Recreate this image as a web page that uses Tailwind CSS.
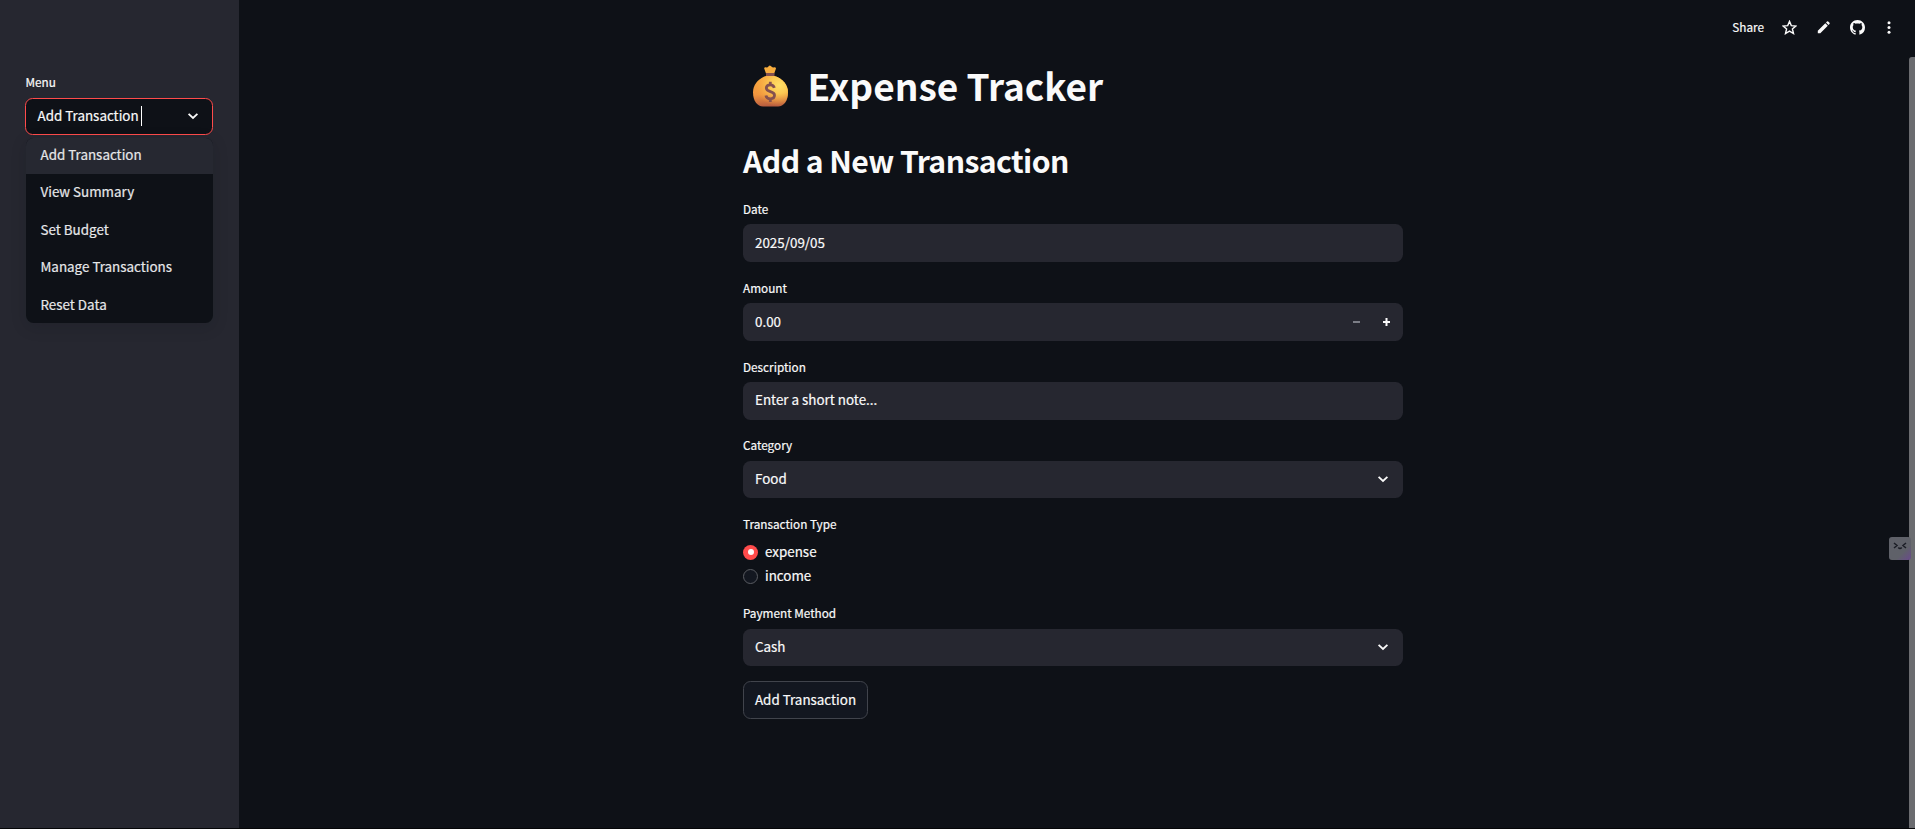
<!DOCTYPE html>
<html lang="en">
<head>
<meta charset="utf-8">
<title>Expense Tracker</title>
<script src="https://cdn.jsdelivr.net/npm/@tailwindcss/browser@4"></script>
</head>
<body class="relative flex h-[829px] w-[1915px] overflow-hidden bg-[#0e1117] font-['Noto_Sans_CJK_JP','Noto_Sans_CJK_SC',sans-serif] text-[13.4px] leading-[24px] text-[#fafafa] whitespace-nowrap [-webkit-text-stroke:0.2px_currentColor]">
  <aside class="h-full w-[239px] shrink-0 bg-[#262730] px-[25px] pt-[72px]">
    <div class="h-[22px] pl-[0.5px] text-[11.75px] leading-[20px]">Menu</div>
    <div class="relative mt-1 w-[188px]">
      <div class="flex h-[37px] items-center rounded-[7.5px] border border-[#ff4b4b] bg-[#0e1117] pb-[2px] pl-[11.5px] pr-[13px]">
        <span class="pb-[2px]">Add Transaction</span>
        <span class="ml-[2.5px] h-5 w-px bg-white"></span>
        <svg class="ml-auto" width="12" height="12" viewBox="0 0 12 12" fill="none" stroke="#fafafa" stroke-width="1.8"><path d="M1.6 3.8 6 8l4.400-4.200"/></svg>
      </div>
      <ul class="absolute left-[0.5px] top-[40px] w-[187.5px] overflow-hidden rounded-[7.5px] bg-[#0e1117] text-[#e6e7e9] shadow-[0_4px_16px_rgba(14,17,23,0.16)]">
        <li class="flex h-[36px] items-center bg-[#262831] pb-[4px] pl-[15px]">Add Transaction</li>
        <li class="flex h-[37.5px] items-center pb-[4px] pl-[15px]">View Summary</li>
        <li class="flex h-[37.5px] items-center pb-[2px] pl-[15px]">Set Budget</li>
        <li class="flex h-[37.5px] items-center pb-[4px] pl-[15px]">Manage Transactions</li>
        <li class="flex h-[36.5px] items-center pb-[1px] pl-[15px]">Reset Data</li>
      </ul>
    </div>
  </aside>
  <main class="flex-1 pl-[504px] pt-[61px]">
    <div class="flex w-[660px] flex-col">
      <h1 class="flex h-[50px] items-center text-[37px] font-bold leading-[50px] [-webkit-text-stroke:0]">
        <svg class="ml-[10px] mr-[19.5px]" width="35" height="42" viewBox="0 0 35 42">
          <defs>
            <linearGradient id="bag" x1="0.2" y1="0" x2="0.3" y2="1"><stop offset="0" stop-color="#f9a83f"/><stop offset=".6" stop-color="#f0953f"/><stop offset="1" stop-color="#b85c3f"/></linearGradient>
            <radialGradient id="glow" cx=".75" cy=".3" r=".7"><stop offset="0" stop-color="#ffe067"/><stop offset=".4" stop-color="#fdce55" stop-opacity=".9"/><stop offset="1" stop-color="#f9a83f" stop-opacity="0"/></radialGradient>
          </defs>
          <path d="M13 8.500 11.200 3.600Q11 2 13 2.200q1.300.5 2-.2 1.500-3 4 0 .8.700 2 .2 2-.2 2 1.400L21.200 8.500Z" fill="#f7ad3e"/>
          <path d="M13 8h8.500v3.500H13z" fill="#85514f"/>
          <path d="M13 11h8.500C29.500 13.500 35 19.500 35 27.500c0 8.500-4.500 14-10 14H10c-5.500 0-10-5.500-10-14C0 19.500 5.500 13.500 13 11Z" fill="url(#bag)"/>
          <path d="M13 11h8.500C29.500 13.500 35 19.500 35 27.500c0 8.500-4.500 14-10 14H10c-5.500 0-10-5.500-10-14C0 19.500 5.500 13.500 13 11Z" fill="url(#glow)"/>
          <path d="M21.300 22.800c-.5-2-2-3-4-3-2.500 0-4 1.400-4 3.300 0 4.700 8.200 2.500 8.200 7.200 0 2.200-1.700 3.500-4.200 3.500s-4-1.300-4.400-3.300M17.300 16.800v3M17.300 33.800v3.300" fill="none" stroke="#85514f" stroke-width="2.800"/>
        </svg>
        <span class="pb-[2px]">Expense Tracker</span>
      </h1>
      <h2 class="mt-[24px] h-[50px] text-[30.2px] font-semibold leading-[50px] tracking-[-0.58px] [-webkit-text-stroke:0]">Add a New Transaction</h2>

      <label class="mt-[14px] h-[22px] text-[11.75px] leading-[20px]">Date</label>
      <div class="mt-[3px] flex h-[38px] items-center rounded-[7.5px] bg-[#262730] px-3 pb-[2px]">2025/09/05</div>

      <label class="mt-[16px] h-[22px] text-[11.75px] leading-[20px]">Amount</label>
      <div class="mt-[3px] flex h-[38px] items-center rounded-[7.5px] bg-[#262730] pl-3 pr-[13px]">
        <span class="mr-auto pb-[2px]">0.00</span>
        <span class="mr-[23px] h-[2px] w-[7px] bg-[#7b7d86]"></span>
        <svg width="7" height="8" viewBox="0 0 7 8" stroke="#fafafa" stroke-width="2"><path d="M3.500 0v8M0 4h7"/></svg>
      </div>

      <label class="mt-[16px] h-[22px] text-[11.75px] leading-[20px]">Description</label>
      <div class="mt-[3px] flex h-[38px] items-center rounded-[7.5px] bg-[#262730] px-3 pb-[4px]">Enter a short note...</div>

      <label class="mt-[15px] h-[23px] text-[11.75px] leading-[20px]">Category</label>
      <div class="mt-[3px] flex h-[37px] items-center justify-between rounded-[7.5px] bg-[#262730] pb-[2px] pl-3 pr-[14px]"><span class="pb-[2px]">Food</span>
        <svg width="12" height="12" viewBox="0 0 12 12" fill="none" stroke="#fafafa" stroke-width="1.8"><path d="M1.600 3.800 6 8l4.400-4.200"/></svg>
      </div>

      <div class="mt-[16px] h-[22px] text-[11.75px] leading-[20px]">Transaction Type</div>
      <div class="mt-[4px] flex h-6 items-center">
        <span class="mr-[7px] flex size-[15px] items-center justify-center rounded-full bg-[#ff4b4b]"><i class="size-[6px] rounded-full bg-[#fafafa]"></i></span><span class="pb-[2px]">expense</span>
      </div>
      <div class="flex h-6 items-center">
        <span class="mr-[7px] size-[15px] rounded-full border border-[#5a5c62] bg-[#131720]"></span><span class="pb-[2px]">income</span>
      </div>

      <div class="mt-[15px] h-[22px] text-[11.75px] leading-[20px]">Payment Method</div>
      <div class="mt-[4px] flex h-[37px] items-center justify-between rounded-[7.5px] bg-[#262730] pb-[2px] pl-3 pr-[14px]"><span class="pb-[2px]">Cash</span>
        <svg width="12" height="12" viewBox="0 0 12 12" fill="none" stroke="#fafafa" stroke-width="1.8"><path d="M1.600 3.800 6 8l4.400-4.200"/></svg>
      </div>
      <button class="mt-[15px] flex h-[38px] w-[125px] items-center justify-center rounded-[7.5px] border border-[#41444c] bg-[#131720] pb-[2px]">Add Transaction</button>
    </div>
  </main>

  <header class="absolute right-[24px] top-[15px] flex h-6 items-center">
    <span class="mr-[18px] text-[11.75px]">Share</span>
    <svg class="mr-[20px]" width="15" height="15" viewBox="0 0 15 15" fill="none" stroke="#fafafa" stroke-width="1.400"><path d="M7.500 1.400 9.300 5.600l4.600.4-3.500 3 1.100 4.500-4-2.400-4 2.400L4.600 9l-3.500-3 4.600-.4Z"/></svg>
    <svg class="mr-[20px]" width="13" height="13" viewBox="0 0 13 13" fill="#fafafa"><path d="M.8 9.700 8.300 2.200l2.500 2.500-7.500 7.500H.8ZM9 1.500l1-1q.6-.5 1.200 0l1.300 1.300q.5.600 0 1.200l-1 1Z"/></svg>
    <svg class="mr-[22px]" width="15" height="15" viewBox="0 0 16 16" fill="#fafafa"><path d="M8 0C3.580 0 0 3.580 0 8c0 3.540 2.290 6.530 5.470 7.590.4.070.55-.17.55-.38 0-.19-.01-.82-.01-1.490-2.010.37-2.530-.49-2.690-.94-.09-.23-.48-.94-.82-1.130-.28-.15-.68-.52-.01-.53.63-.01 1.080.58 1.230.82.72 1.210 1.870.87 2.330.66.07-.52.28-.87.51-1.070-1.780-.2-3.640-.89-3.640-3.950 0-.87.31-1.590.82-2.150-.08-.2-.36-1.020.08-2.120 0 0 .67-.21 2.200.82.64-.18 1.320-.27 2-.27s1.360.09 2 .27c1.530-1.040 2.200-.82 2.200-.82.44 1.100.16 1.920.08 2.120.51.56.82 1.270.82 2.150 0 3.070-1.870 3.750-3.650 3.950.29.25.54.73.54 1.480 0 1.070-.01 1.930-.01 2.200 0 .21.15.46.55.38A8.010 8.010 0 0 0 16 8c0-4.420-3.580-8-8-8Z"/></svg>
    <svg width="4" height="13" viewBox="0 0 4 13" fill="#fafafa"><circle cx="2" cy="1.800" r="1.500"/><circle cx="2" cy="6.500" r="1.500"/><circle cx="2" cy="11.200" r="1.500"/></svg>
  </header>

  <div class="absolute left-[1909px] top-[57px] h-[771px] w-[6px] rounded-tl-[3px] bg-[#6b6c70]"></div>
  <div class="absolute left-[1889px] top-[537px] flex h-[23px] w-[22px] justify-center rounded-[3px] bg-[linear-gradient(135deg,#5f6169_65%,#6a4a8c)] pt-[5px]">
    <svg width="14" height="8" viewBox="0 0 14 8" fill="none" stroke="#1b1d26" stroke-width="1.500"><path d="m1 1 3 2.500L1 6M13 1l-3 2.500L13 6M5.300 5.500q1.700 2 3.400 0"/></svg>
  </div>
  <div class="absolute bottom-0 left-0 h-px w-full bg-[#050608]"></div>
</body>
</html>
